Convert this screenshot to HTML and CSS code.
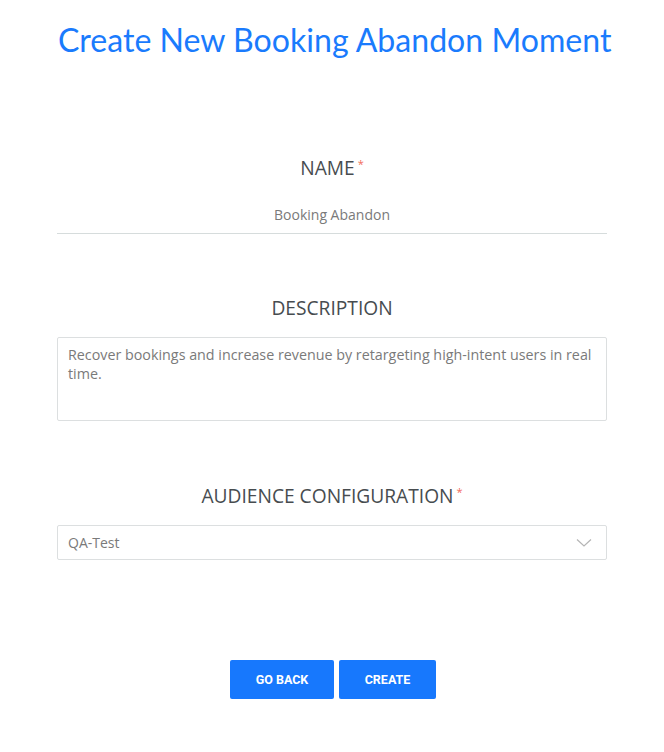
FILE: index.html
```html
<!DOCTYPE html>
<html lang="en">
<head>
<meta charset="utf-8">
<title>Create New Booking Abandon Moment</title>
<link rel="stylesheet" href="styles.css">
</head>
<body>
<div class="page">
  <h1 class="title">Create New Booking Abandon Moment</h1>
  <form class="form">
    <div class="field field-name">
      <label class="label">NAME<span class="req">*</span></label>
      <div class="line-input">Booking Abandon</div>
    </div>
    <div class="field field-desc">
      <label class="label">DESCRIPTION</label>
      <div class="textarea">Recover bookings and increase revenue by retargeting high-intent users in real time.</div>
    </div>
    <div class="field field-aud">
      <label class="label">AUDIENCE CONFIGURATION<span class="req">*</span></label>
      <div class="select">
        <span class="select-value">QA-Test</span>
        <svg class="chevron" width="16" height="10" viewBox="0 0 16 10"><path d="M1 1.5 L8 8 L15 1.5" fill="none" stroke="#b5b5b5" stroke-width="1.2"/></svg>
      </div>
    </div>
    <div class="actions">
      <button type="button" class="btn btn-back">GO BACK</button>
      <button type="button" class="btn btn-create">CREATE</button>
    </div>
  </form>
</div>
</body>
</html>
```
FILE: styles.css
```css
html, body {
  margin: 0;
  padding: 0;
  background: #fff;
}
.page {
  width: 550px;
  margin: 0 auto;
  padding-top: 20px;
  font-family: "Open Sans", "Noto Sans", sans-serif;
}
.title {
  margin: 0;
  padding-left: 1px;
  font-family: Lato, sans-serif;
  font-weight: 400;
  font-size: 32.1px;
  line-height: 40px;
  color: #1a7bfd;
  text-align: center;
  white-space: nowrap;
}
.form {
  display: flex;
  flex-direction: column;
}
.field {
  display: flex;
  flex-direction: column;
  align-items: center;
}
.field-name { margin-top: 95px; }
.field-desc { margin-top: 61px; }
.field-aud { margin-top: 62px; }
.label {
  font-size: 19.2px;
  line-height: 26px;
  color: #474c4f;
}
.req {
  color: #f26b5b;
  font-size: 11px;
  line-height: 0;
  vertical-align: 7px;
  margin-left: 3px;
}
.line-input {
  align-self: stretch;
  margin-top: 24px;
  padding-bottom: 8px;
  border-bottom: 1px solid #d6dcdc;
  text-align: center;
  font-size: 14px;
  line-height: 20px;
  color: #7a7a7a;
}
.textarea {
  align-self: stretch;
  box-sizing: border-box;
  margin-top: 16px;
  height: 84px;
  padding: 7px 10px;
  border: 1px solid #dcdfe0;
  border-radius: 2px;
  font-size: 14.3px;
  line-height: 19px;
  color: #7a7a7a;
}
.select {
  align-self: stretch;
  box-sizing: border-box;
  margin-top: 16px;
  height: 35px;
  padding: 0 14px 0 10px;
  border: 1px solid #dcdfe0;
  border-radius: 2px;
  display: flex;
  align-items: center;
  justify-content: space-between;
  font-size: 14px;
  color: #7a7a7a;
}
.actions {
  margin-top: 100px;
  display: flex;
  justify-content: center;
  gap: 5px;
  padding-left: 2px;
}
.btn {
  height: 39px;
  border: none;
  border-radius: 2px;
  background: #1778fd;
  color: #fff;
  font-family: Roboto, sans-serif;
  font-weight: 700;
  font-size: 12.5px;
  padding: 0;
}
.btn-back { width: 104px; }
.btn-create { width: 97px; }
```
